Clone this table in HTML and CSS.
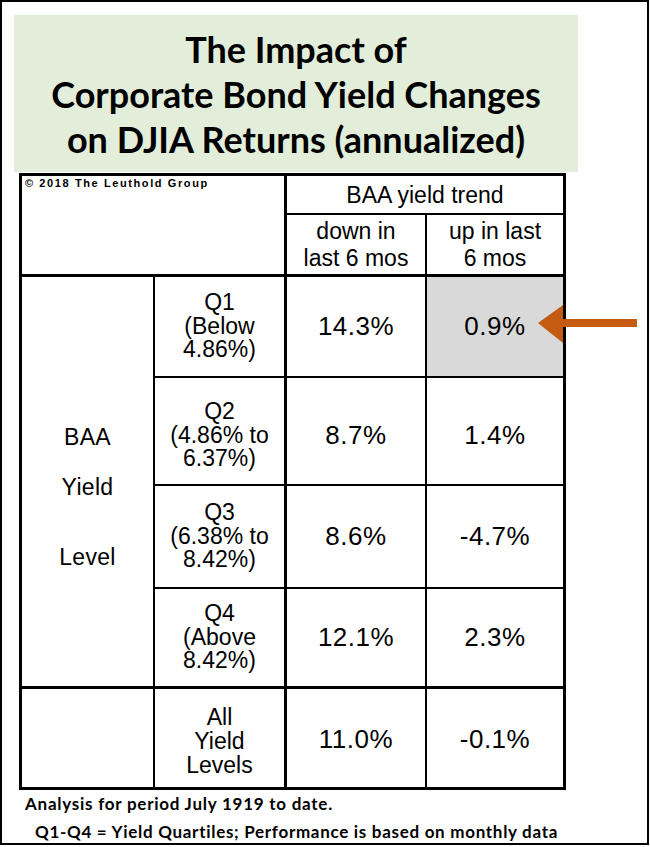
FILE: index.html
```html
<!DOCTYPE html>
<html>
<head>
<meta charset="utf-8">
<link rel="stylesheet" href="styles.css">
</head>
<body>
<div class="frame">
  <div class="title">
    <div>The Impact of</div>
    <div>Corporate Bond Yield Changes</div>
    <div>on DJIA Returns (annualized)</div>
  </div>
  <div class="grid">
    <div class="c copy br3 bb3">© 2018 The Leuthold Group</div>
    <div class="c hd trend br3 bb2">BAA yield trend</div>
    <div class="c hd sub br2 bb3">down in<br>last 6 mos</div>
    <div class="c hd sub br3 bb3">up in last<br>6 mos</div>

    <div class="c side br2 bb3">
      <span class="s1">BAA</span>
      <span class="s2">Yield</span>
      <span class="s3">Level</span>
    </div>

    <div class="c q br3 bb2">Q1<br>(Below<br>4.86%)</div>
    <div class="c v br2 bb2">14.3%</div>
    <div class="c v gray br3 bb2">0.9%</div>

    <div class="c q low br3 bb2">Q2<br>(4.86% to<br>6.37%)</div>
    <div class="c v low br2 bb2">8.7%</div>
    <div class="c v low br3 bb2">1.4%</div>

    <div class="c q br3 bb2">Q3<br>(6.38% to<br>8.42%)</div>
    <div class="c v br2 bb2">8.6%</div>
    <div class="c v br3 bb2">-4.7%</div>

    <div class="c q br3 bb3">Q4<br>(Above<br>8.42%)</div>
    <div class="c v br2 bb3">12.1%</div>
    <div class="c v br3 bb3">2.3%</div>

    <div class="c br2 bb3"></div>
    <div class="c q all br3 bb3">All<br>Yield<br>Levels</div>
    <div class="c v all-v br2 bb3">11.0%</div>
    <div class="c v all-v br3 bb3">-0.1%</div>
  </div>
  <div class="note1">Analysis for period July 1919 to date.</div>
  <div class="note2">Q1-Q4 = Yield Quartiles; Performance is based on monthly data</div>

  <svg class="arrow" width="100" height="40" viewBox="0 0 100 40">
    <polygon points="0,19 25,1 25,15 99,15 99,23 25,23 25,39" fill="#c55a11"/>
  </svg>
</div>
</body>
</html>
```

FILE: styles.css
```css
html, body {
  margin: 0;
  padding: 0;
  background: #ffffff;
}

.frame {
  position: relative;
  box-sizing: border-box;
  width: 649px;
  height: 845px;
  border: 2px solid #000;
  padding: 13px 0 0 12px;
  background: #fff;
}

.title {
  box-sizing: border-box;
  width: 564px;
  height: 157px;
  background: #e2eed9;
  padding-top: 12px;
  font-family: "Lato", "Liberation Sans", sans-serif;
  font-weight: 700;
  font-size: 36px;
  line-height: 45px;
  text-align: center;
  color: #000;
}

.grid {
  margin-left: 5px;
  margin-top: 1px;
  display: grid;
  grid-template-columns: 133px 132px 140px 139px;
  grid-template-rows: 39px 62px 101px 108px 103px 100px 101px;
  width: 547px;
  box-sizing: border-box;
  border-top: 3px solid #000;
  border-left: 3px solid #000;
  font-family: "Liberation Sans", Arial, sans-serif;
  color: #000;
}

.c {
  box-sizing: border-box;
  border-style: solid;
  border-color: #000;
  border-width: 0;
  display: flex;
  flex-direction: column;
  align-items: center;
  justify-content: center;
  text-align: center;
}

.br2 { border-right-width: 2px; }
.br3 { border-right-width: 3px; }
.bb2 { border-bottom-width: 2px; }
.bb3 { border-bottom-width: 3px; }

.copy {
  grid-column: 1 / 3;
  grid-row: 1 / 3;
  align-items: flex-start;
  justify-content: flex-start;
  text-align: left;
  padding: 1px 0 0 3px;
  font-size: 11px;
  font-weight: 700;
  letter-spacing: 1.6px;
  line-height: 13px;
}

.hd {
  font-size: 23px;
  line-height: 27px;
}

.trend {
  grid-column: 3 / 5;
  grid-row: 1;
  line-height: 24px;
}

.sub {
  grid-row: 2;
  padding-top: 1px;
}

.side {
  grid-column: 1;
  grid-row: 3 / 7;
  justify-content: flex-start;
  padding-top: 148px;
  font-size: 23px;
  letter-spacing: 0.3px;
  line-height: 24px;
}

.side .s2 { margin-top: 26px; }
.side .s3 { margin-top: 46px; }

.q {
  font-size: 23px;
  line-height: 23.5px;
}

.low {
  padding-top: 9px;
}

.all {
  line-height: 24px;
  padding-top: 5px;
}

.all-v {
  padding-top: 2px;
}

.v {
  font-size: 26px;
  letter-spacing: 0.5px;
}

.gray {
  background: #d9d9d9;
}

.note1 {
  margin: 4px 0 0 11px;
  font-family: "Lato", "Liberation Sans", sans-serif;
  font-weight: 700;
  font-size: 17px;
  letter-spacing: 0.75px;
  line-height: 20px;
}

.note2 {
  margin: 8px 0 0 21px;
  font-family: "Lato", "Liberation Sans", sans-serif;
  font-weight: 700;
  font-size: 17px;
  letter-spacing: 0.7px;
  line-height: 20px;
}

.arrow {
  position: absolute;
  left: 536px;
  top: 302px;
}
```
